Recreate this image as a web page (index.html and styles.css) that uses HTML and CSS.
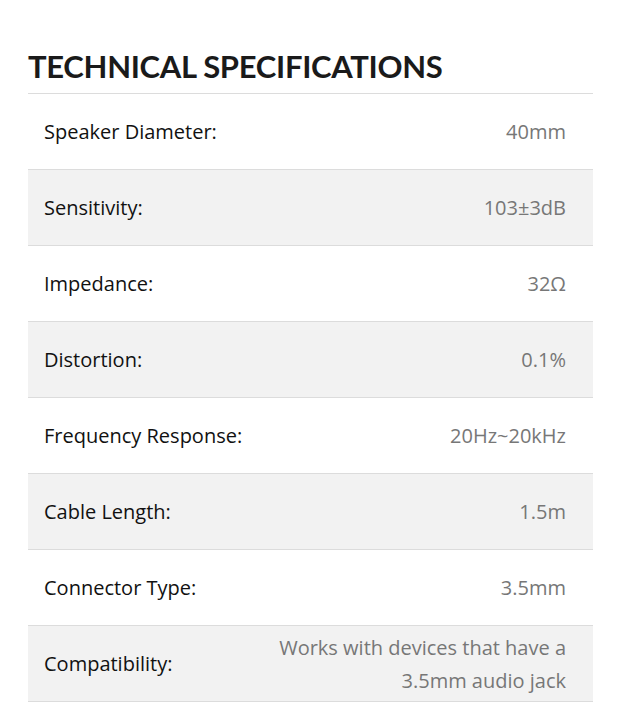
FILE: index.html
```html
<!DOCTYPE html>
<html>
<head>
<meta charset="utf-8">
<link rel="stylesheet" href="styles.css">
</head>
<body>
<section class="specs">
  <h2 class="specs-title">TECHNICAL SPECIFICATIONS</h2>
  <div class="specs-table">
    <div class="row"><span class="label">Speaker Diameter:</span><span class="value">40mm</span></div>
    <div class="row alt"><span class="label">Sensitivity:</span><span class="value">103±3dB</span></div>
    <div class="row"><span class="label">Impedance:</span><span class="value">32Ω</span></div>
    <div class="row alt"><span class="label">Distortion:</span><span class="value">0.1%</span></div>
    <div class="row"><span class="label">Frequency Response:</span><span class="value">20Hz~20kHz</span></div>
    <div class="row alt"><span class="label">Cable Length:</span><span class="value">1.5m</span></div>
    <div class="row"><span class="label">Connector Type:</span><span class="value">3.5mm</span></div>
    <div class="row alt"><span class="label">Compatibility:</span><span class="value wrap">Works with devices that have a 3.5mm audio jack</span></div>
  </div>
</section>
</body>
</html>
```
FILE: styles.css
```css
html, body {
  margin: 0;
  padding: 0;
  background: #fff;
}
.specs {
  padding: 48px 42px 0 28px;
}
.specs-title {
  margin: 0 0 9px;
  font-family: "Lato", "Liberation Sans", sans-serif;
  font-weight: 700;
  font-size: 31px;
  line-height: 36px;
  letter-spacing: -0.3px;
  color: #1a1a1a;
}
.specs-table {
  border-top: 1px solid #dcdcdc;
}
.row {
  display: flex;
  justify-content: space-between;
  align-items: center;
  min-height: 75px;
  padding: 0 27px 0 16px;
  border-bottom: 1px solid #dcdcdc;
  font-family: "Open Sans", "Noto Sans", sans-serif;
  font-size: 20px;
}
.row.alt {
  background: #f2f2f2;
}
.label {
  color: #111;
}
.value {
  color: #777;
  text-align: right;
}
.value.wrap {
  max-width: 300px;
  line-height: 33px;
}
```
